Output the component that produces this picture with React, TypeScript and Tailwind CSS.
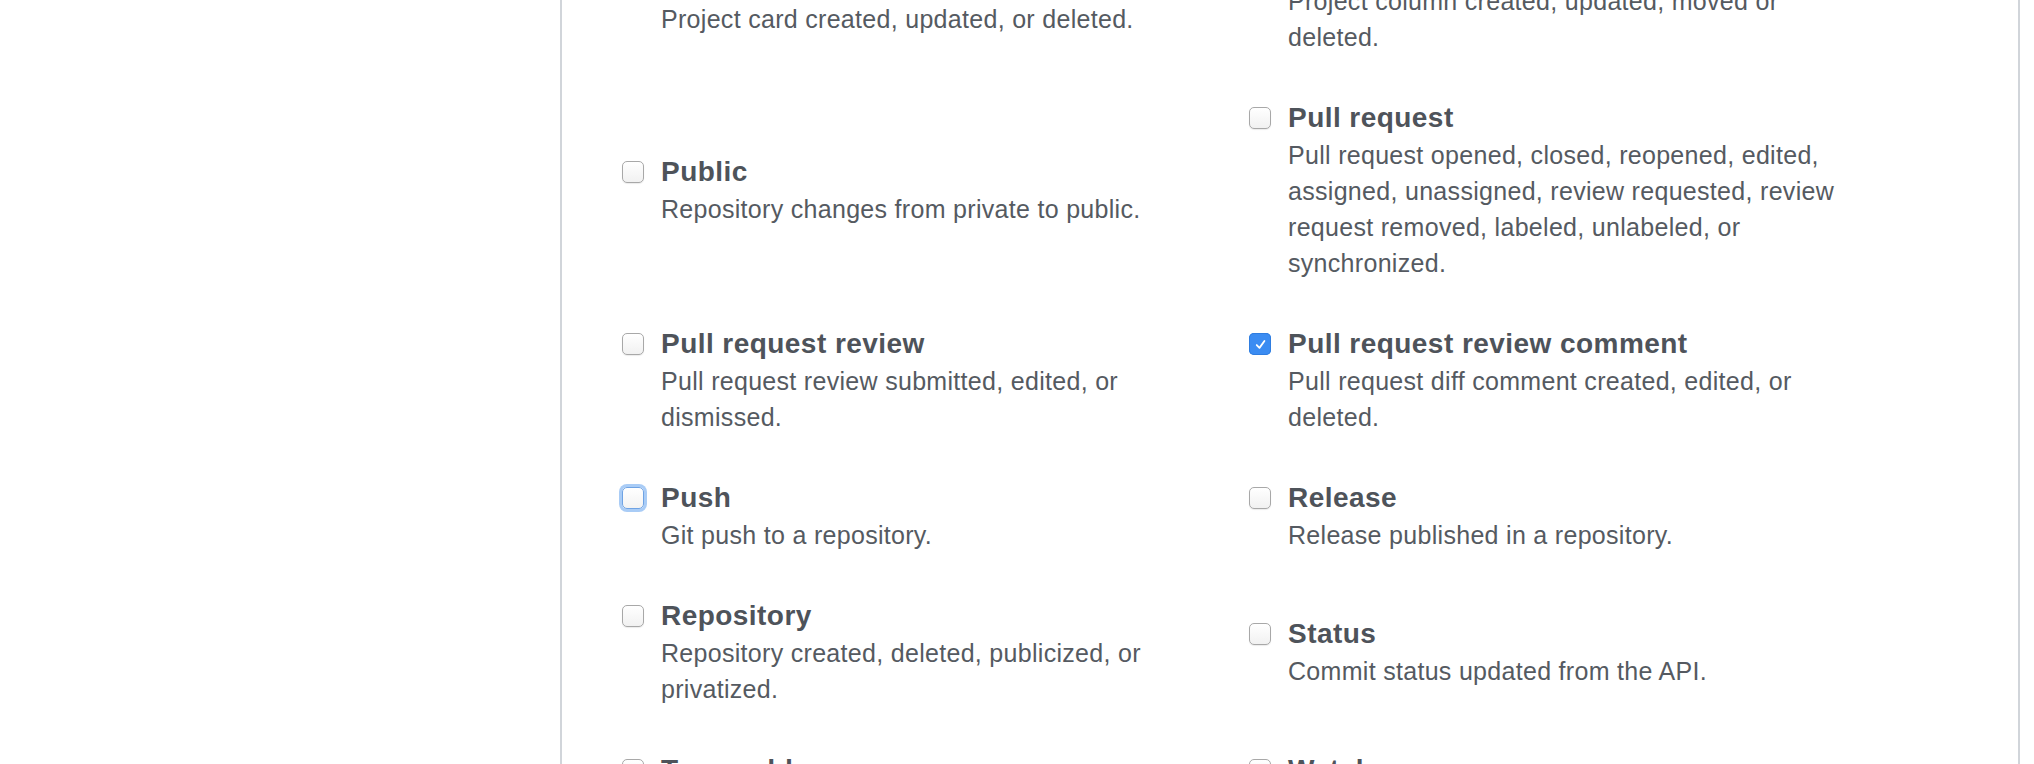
import React from 'react';

type HookEvent = {
  name: string;
  description: string;
  checked?: boolean;
  focused?: boolean;
};

const events: HookEvent[] = [
  { name: 'Project card', description: 'Project card created, updated, or deleted.' },
  { name: 'Project column', description: 'Project column created, updated, moved or deleted.' },
  { name: 'Public', description: 'Repository changes from private to public.' },
  {
    name: 'Pull request',
    description:
      'Pull request opened, closed, reopened, edited, assigned, unassigned, review requested, review request removed, labeled, unlabeled, or synchronized.',
  },
  { name: 'Pull request review', description: 'Pull request review submitted, edited, or dismissed.' },
  {
    name: 'Pull request review comment',
    description: 'Pull request diff comment created, edited, or deleted.',
    checked: true,
  },
  { name: 'Push', description: 'Git push to a repository.', focused: true },
  { name: 'Release', description: 'Release published in a repository.' },
  { name: 'Repository', description: 'Repository created, deleted, publicized, or privatized.' },
  { name: 'Status', description: 'Commit status updated from the API.' },
  { name: 'Team add', description: 'Team added or modified on a repository.' },
  { name: 'Watch', description: 'User stars a repository.' },
];

const Checkbox: React.FC<{ checked?: boolean; focused?: boolean }> = ({ checked, focused }) => {
  if (checked) {
    return (
      <span className="flex h-[22px] w-[22px] items-center justify-center rounded-[5px] bg-[#3b8cf2] shadow-[inset_0_0_0_1px_#2f7de0]">
        <svg viewBox="0 0 16 16" className="h-[15px] w-[15px]" fill="none">
          <path d="M4 8.6 L6.9 11.6 L12.2 4.2" stroke="#ffffff" strokeWidth="1.9" strokeLinecap="round" strokeLinejoin="round" />
        </svg>
      </span>
    );
  }
  return (
    <span
      className={
        focused
          ? 'block h-[22px] w-[22px] rounded-[5px] border border-[#6fa3e4] bg-gradient-to-b from-white to-[#f3f3f3] shadow-[0_0_0_3px_#a9ccf6]'
          : 'block h-[22px] w-[22px] rounded-[5px] border border-[#a8a8a8] bg-gradient-to-b from-white to-[#f1f1f1] shadow-[0_1px_1px_rgba(0,0,0,0.08)]'
      }
    />
  );
};

const EventItem: React.FC<{ event: HookEvent }> = ({ event }) => (
  <label className="flex">
    <div className="w-[39px] shrink-0 pt-[8px]">
      <Checkbox checked={event.checked} focused={event.focused} />
    </div>
    <div className="w-[580px]">
      <div className="text-[28px] font-bold leading-[38px] tracking-[0.45px] text-[#4e535a]">{event.name}</div>
      <p className="text-[25px] leading-[36px] tracking-[0.3px] text-[#555a61]">{event.description}</p>
    </div>
  </label>
);

export default function App() {
  return (
    <div className="flex h-[764px] overflow-hidden bg-white font-['Liberation_Sans',Arial,sans-serif]">
      <div className="w-[560px] shrink-0" />
      <div className="w-[1460px] shrink-0 border-x-2 border-[#d1d5da] pl-[60px]">
        <div className="-mt-[55px] grid grid-cols-[627px_627px] items-center gap-y-[44px]">
          {events.map((event) => (
            <EventItem key={event.name} event={event} />
          ))}
        </div>
      </div>
    </div>
  );
}
